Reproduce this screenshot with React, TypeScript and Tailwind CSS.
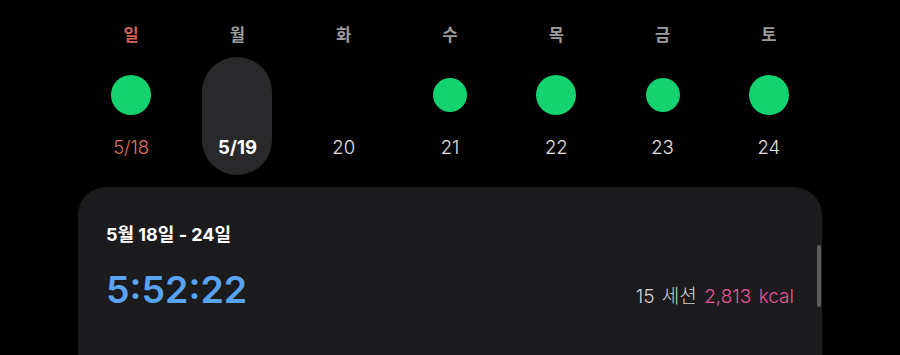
import React from "react";

type Day = { label: string; date: string; size: number; sunday?: boolean; selected?: boolean };

const days: Day[] = [
  { label: "일", date: "5/18", size: 40, sunday: true },
  { label: "월", date: "5/19", size: 0, selected: true },
  { label: "화", date: "20", size: 0 },
  { label: "수", date: "21", size: 34 },
  { label: "목", date: "22", size: 40 },
  { label: "금", date: "23", size: 34 },
  { label: "토", date: "24", size: 40 },
];

export default function App() {
  return (
    <div
      className="w-[900px] h-[355px] bg-black overflow-hidden"
      style={{ fontFamily: '"Inter", "Noto Sans CJK KR", sans-serif' }}
    >
      <div className="mx-[78px] w-[744px]">
        <div className="grid grid-cols-7">
          {days.map((d) => (
            <div key={d.label} className="flex flex-col items-center pt-[25px]">
              <div
                className={`h-[20px] leading-[20px] text-[16.5px] font-bold ${
                  d.sunday ? "text-[#d5625c]" : "text-[#9c9c9e]"
                }`}
              >
                {d.label}
              </div>
              <div
                className={`mt-[12px] w-[70px] h-[118px] rounded-full flex flex-col items-center pt-[18px] ${
                  d.selected ? "bg-[#29292b]" : ""
                }`}
              >
                <div className="h-[40px] flex items-center justify-center">
                  {d.size > 0 && (
                    <div
                      className={`rounded-full bg-[#14d26f] ${
                        d.size === 40 ? "w-[40px] h-[40px]" : "w-[34px] h-[34px]"
                      }`}
                    />
                  )}
                </div>
                <div
                  className={`mt-[21px] h-[22px] leading-[22px] text-[18.5px] ${
                    d.sunday
                      ? "text-[#e2716a] font-light"
                      : d.selected
                      ? "text-white font-bold"
                      : "text-[#e2e2e4] font-light"
                  }`}
                >
                  {d.date}
                </div>
              </div>
            </div>
          ))}
        </div>
        <div className="relative mt-[12px] h-[200px] rounded-[28px] bg-[#1b1b1d] px-[28px] pt-[36px]">
          <div className="text-[18px] leading-[24px] font-bold text-white">5월 18일 - 24일</div>
          <div className="mt-[19px] flex items-baseline justify-between">
            <div className="text-[37.5px] leading-[48px] font-semibold text-[#5aa3f2]">
              5:52:22
            </div>
            <div className="text-[19px] leading-[24px] font-light [word-spacing:2px]">
              <span className="text-[#d6d6d8]">15 세션 </span>
              <span className="text-[#e8559a]">2,813 kcal</span>
            </div>
          </div>
          <div className="absolute right-[1px] top-[58px] w-[4px] h-[62px] rounded-full bg-[#5b5b5d]" />
        </div>
      </div>
    </div>
  );
}
